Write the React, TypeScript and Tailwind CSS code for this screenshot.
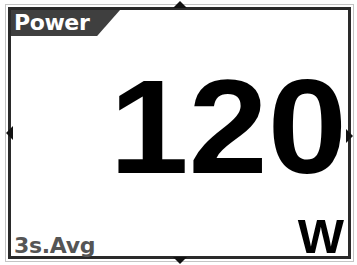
import React from 'react';

const Notch: React.FC<{ dir: 'up' | 'down' | 'left' | 'right'; className: string }> = ({ dir, className }) => {
  const pts = {
    up: '0,8 7,1 14,8',
    down: '0,0 7,7 14,0',
    left: '8,0 1,7 8,14',
    right: '0,0 7,7 0,14',
  }[dir];
  const size = dir === 'up' || dir === 'down' ? { w: 14, h: 8 } : { w: 8, h: 14 };
  return (
    <svg className={`absolute ${className}`} width={size.w} height={size.h} viewBox={`0 0 ${size.w} ${size.h}`}>
      <polygon points={pts} fill="#111" />
    </svg>
  );
};

const App: React.FC = () => {
  return (
    <div className="relative w-[357px] h-[265px] bg-white pl-[5px] pt-[4px] pr-[3px] pb-[3px]">
      <div className="h-full border border-[#c4c4c4] p-[2px]">
        <div className="h-full border-[3px] border-[#2a2a2a] flex flex-col bg-white">
          <div className="h-[26px] w-[109px] bg-[#3f3f3f] [clip-path:polygon(0_0,100%_0,79%_100%,0_100%)] flex items-center pl-[3px]">
            <span className="text-white font-bold text-[22px] leading-none font-['DejaVu_Sans',sans-serif] tracking-[-0.4px]">
              Power
            </span>
          </div>
          <div className="flex justify-end pr-[1px] mt-[25px]">
            <span className="text-black font-bold text-[133px] leading-none font-['Liberation_Sans',Arial,sans-serif] scale-x-[1.07] origin-right">
              120
            </span>
          </div>
          <div className="flex-1 flex items-end justify-between pl-[3px] pr-[4px]">
            <span className="text-[#555] font-bold text-[22px] leading-none font-['DejaVu_Sans',sans-serif] tracking-[-0.3px] -mb-[1px]">
              3s.Avg
            </span>
            <span className="text-black font-bold text-[49px] leading-none font-['Liberation_Sans',Arial,sans-serif] -mb-[5px]">
              W
            </span>
          </div>
        </div>
      </div>
      <Notch dir="up" className="left-[173px] top-[0px]" />
      <Notch dir="down" className="left-[173px] top-[257px]" />
      <Notch dir="left" className="left-[5px] top-[126px]" />
      <Notch dir="right" className="left-[346px] top-[129px]" />
    </div>
  );
};

export default App;
